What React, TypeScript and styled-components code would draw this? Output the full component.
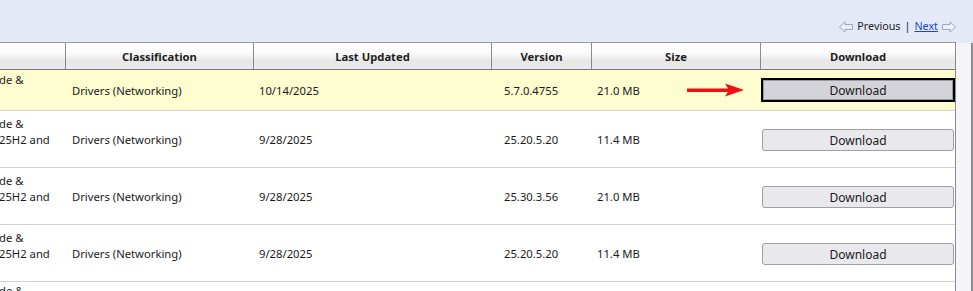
import styled, { createGlobalStyle } from 'styled-components';

type Row = {
  lines: string[];
  date: string;
  version: string;
  size: string;
  selected?: boolean;
};

const rows: Row[] = [
  { lines: ['de &', ''], date: '10/14/2025', version: '5.7.0.4755', size: '21.0 MB', selected: true },
  { lines: ['de &', '25H2 and', ''], date: '9/28/2025', version: '25.20.5.20', size: '11.4 MB' },
  { lines: ['de &', '25H2 and', ''], date: '9/28/2025', version: '25.30.3.56', size: '21.0 MB' },
  { lines: ['de &', '25H2 and', ''], date: '9/28/2025', version: '25.20.5.20', size: '11.4 MB' },
];

const columns = '66px 188px 238px 100px 169px 194px';

function PagerArrow({ flip }: { flip?: boolean }) {
  return (
    <svg width="14" height="12" viewBox="0 0 14 12" style={flip ? { transform: 'scaleX(-1)' } : undefined}>
      <polygon
        points="0.5,6 6,0.8 6,3.6 13.5,3.6 13.5,8.4 6,8.4 6,11.2"
        fill="#eef1f8"
        stroke="#9aa3b8"
        strokeWidth="1"
      />
    </svg>
  );
}

function RedArrow() {
  return (
    <svg width="58" height="14" viewBox="0 0 58 14">
      <rect x="0" y="5.5" width="42" height="3.5" fill="#ee1111" />
      <polygon points="38,0.5 57,7 38,13.5 42,7" fill="#ee1111" />
    </svg>
  );
}

export default function App() {
  return (
    <>
      <GlobalStyle />
      <Page>
        <Pager>
          <PagerArrow />
          <PagerText>Previous</PagerText>
          <PagerText>|</PagerText>
          <NextLink href="#">Next</NextLink>
          <PagerArrow flip />
        </Pager>
        <Body>
          <Table>
            <HeaderRow>
              <HeaderCell />
              <HeaderCell>Classification</HeaderCell>
              <HeaderCell>Last Updated</HeaderCell>
              <HeaderCell>Version</HeaderCell>
              <HeaderCell>Size</HeaderCell>
              <HeaderCell $last>Download</HeaderCell>
            </HeaderRow>
            {rows.map((row, i) => (
              <DataRow key={i} $selected={row.selected}>
                <TitleCell $top={row.selected ? 2 : 5}>
                  {row.lines.map((line, j) => (
                    <TitleLine key={j}>{line || '\u00a0'}</TitleLine>
                  ))}
                </TitleCell>
                <Cell $pad={6}>Drivers (Networking)</Cell>
                <Cell $pad={5}>{row.date}</Cell>
                <Cell $pad={12}>{row.version}</Cell>
                <SizeCell>
                  <span>{row.size}</span>
                  {row.selected && <RedArrow />}
                </SizeCell>
                <ButtonCell>
                  <DownloadButton $selected={row.selected}>Download</DownloadButton>
                </ButtonCell>
              </DataRow>
            ))}
            <DataRow>
              <TitleCell $top={1}>
                <TitleLine>de &amp;</TitleLine>
              </TitleCell>
            </DataRow>
          </Table>
          <SideStrip />
        </Body>
      </Page>
    </>
  );
}

const GlobalStyle = createGlobalStyle`
  html, body {
    margin: 0;
    padding: 0;
    overflow: hidden;
    background: #e4e9f8;
  }
  body {
    font-family: 'Noto Sans', 'Open Sans', sans-serif;
    font-size: 11.25px;
    color: #1a1a1a;
  }
`;

const Page = styled.div`
  width: 973px;
  height: 291px;
  overflow: hidden;
  display: flex;
  flex-direction: column;
`;

const Pager = styled.div`
  height: 42px;
  flex-shrink: 0;
  display: flex;
  align-items: flex-end;
  justify-content: flex-end;
  gap: 4px;
  padding: 0 17px 9px 0;
  box-sizing: border-box;
  font-size: 10.75px;
  line-height: 14px;

  svg {
    margin-bottom: 0;
  }
`;

const PagerText = styled.span`
  color: #222;
`;

const NextLink = styled.a`
  color: #2244cc;
  text-decoration: underline;
`;

const Body = styled.div`
  display: flex;
  flex: 1;
  min-height: 0;
`;

const Table = styled.div`
  width: 956px;
  flex-shrink: 0;
  background: #fff;
  border-right: 1px solid #8a8a8a;
  box-sizing: border-box;
  display: flex;
  flex-direction: column;
`;

const HeaderRow = styled.div`
  display: grid;
  grid-template-columns: ${columns};
  height: 28px;
  flex-shrink: 0;
  border-top: 1px solid #9a9a9a;
  border-bottom: 1px solid #777;
  box-sizing: border-box;
  background: linear-gradient(#ffffff 0%, #fafafa 40%, #e6e6e6 70%, #ececec 100%);
`;

const HeaderCell = styled.div<{ $last?: boolean }>`
  display: flex;
  align-items: center;
  justify-content: center;
  font-weight: 700;
  font-size: 11.25px;
  color: #1e1e1e;
  border-right: ${({ $last }) => ($last ? 'none' : '1px solid #8a8a8a')};
`;

const DataRow = styled.div<{ $selected?: boolean }>`
  display: grid;
  grid-template-columns: ${columns};
  height: ${({ $selected }) => ($selected ? '41px' : '57px')};
  flex-shrink: 0;
  box-sizing: border-box;
  border-bottom: 1px solid #d2d2d2;
  background: ${({ $selected }) => ($selected ? '#fefdd0' : '#fff')};
`;

const TitleCell = styled.div<{ $top: number }>`
  display: flex;
  flex-direction: column;
  justify-content: flex-start;
  padding-top: ${({ $top }) => $top}px;
  overflow: hidden;
  white-space: nowrap;
`;

const TitleLine = styled.div`
  line-height: 16px;
  margin-left: -1px;
`;

const Cell = styled.div<{ $pad: number }>`
  display: flex;
  align-items: center;
  padding-left: ${({ $pad }) => $pad}px;
  white-space: nowrap;
`;

const SizeCell = styled.div`
  display: flex;
  align-items: center;
  justify-content: space-between;
  padding: 0 16px 0 5px;
`;

const ButtonCell = styled.div`
  display: flex;
  align-items: center;
  justify-content: center;
`;

const DownloadButton = styled.button<{ $selected?: boolean }>`
  width: ${({ $selected }) => ($selected ? '194px' : '192px')};
  height: ${({ $selected }) => ($selected ? '24px' : '22px')};
  margin-top: ${({ $selected }) => ($selected ? '0' : '2px')};
  font-family: 'Noto Sans', 'Open Sans', sans-serif;
  font-size: 12px;
  color: #1a1a1a;
  padding: 0;
  border-radius: ${({ $selected }) => ($selected ? '0' : '3px')};
  border: ${({ $selected }) => ($selected ? '2px solid #000' : '1px solid #a0a0a0')};
  background: ${({ $selected }) => ($selected ? '#d3d3d9' : '#e9e9ed')};
  box-shadow: ${({ $selected }) => ($selected ? 'inset 0 0 0 1px #9a9aa0' : 'none')};
`;

const SideStrip = styled.div`
  flex: 1;
  background: #f3f5fb;
  border-right: 2px solid #8c8c8c;
  margin-top: 1px;
`;
